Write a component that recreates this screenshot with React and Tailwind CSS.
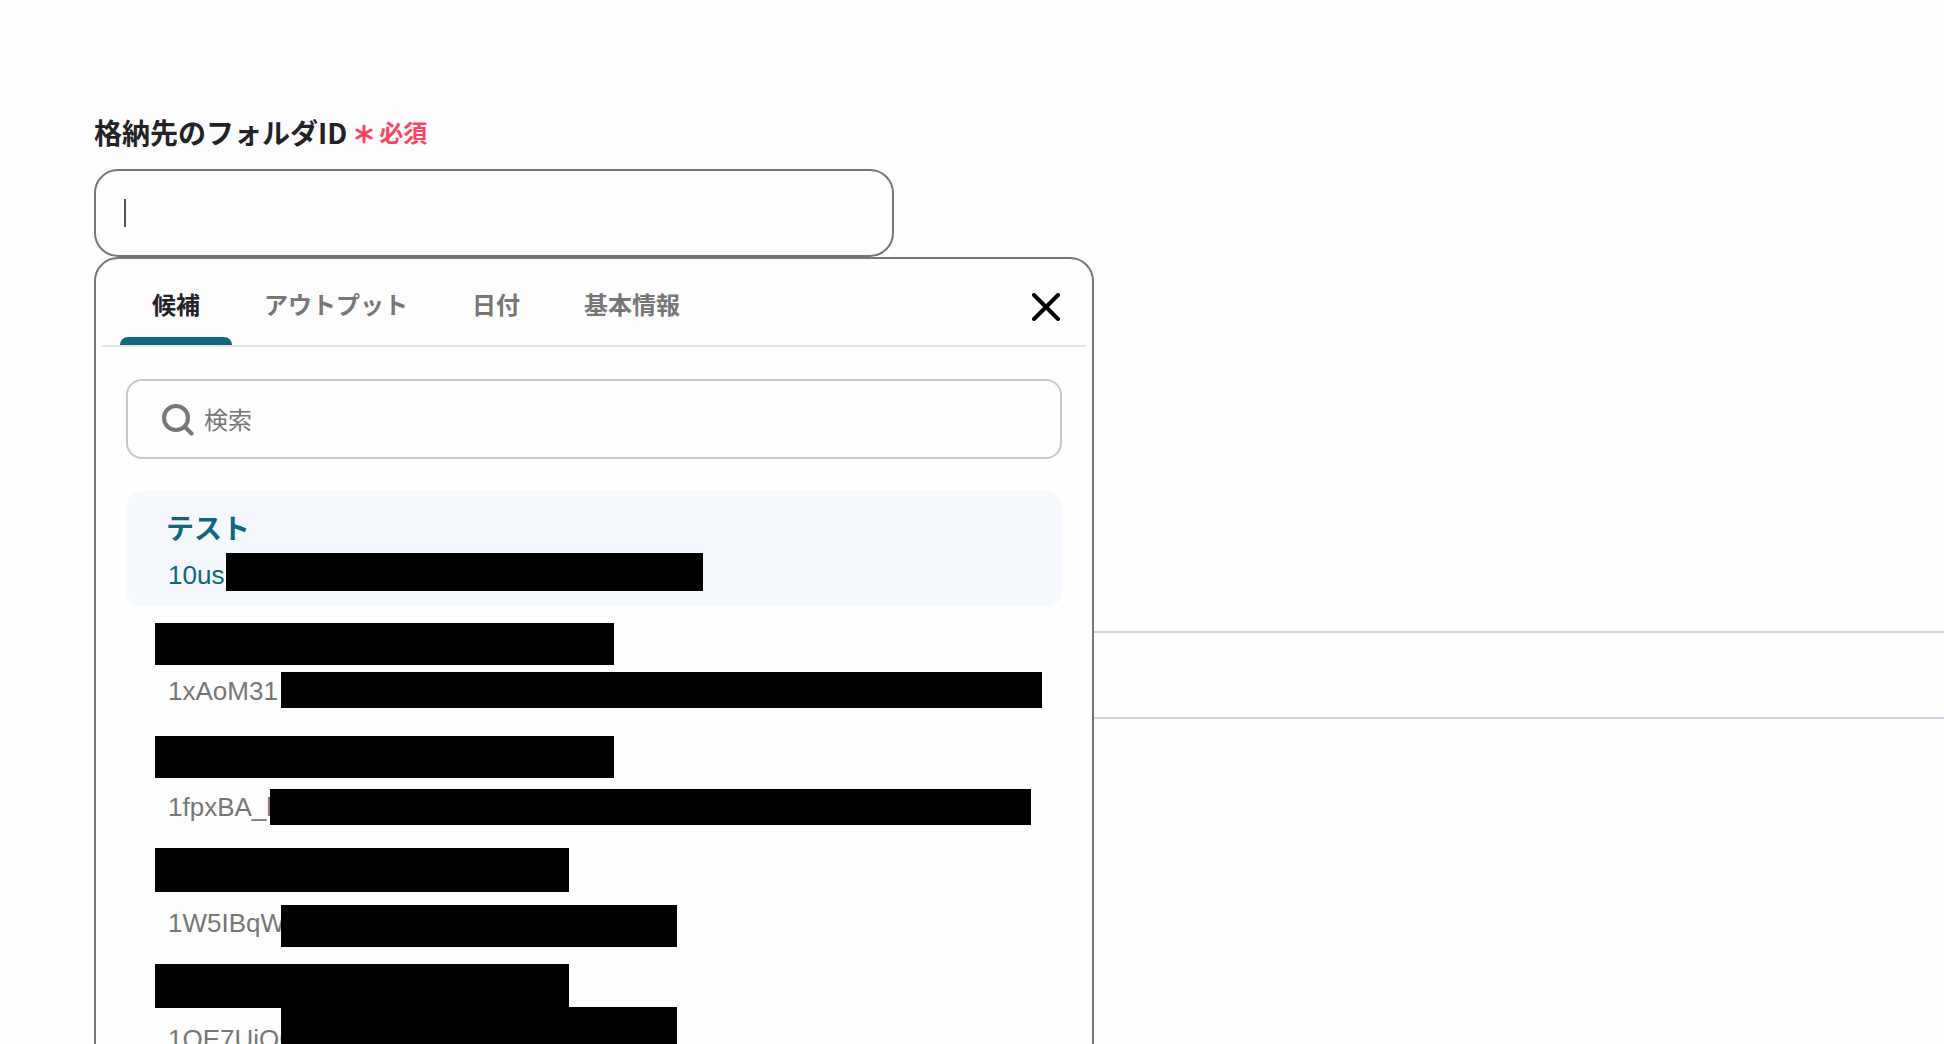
import { useState } from 'react'

const tabs = ['候補', 'アウトプット', '日付', '基本情報']

const candidates = [
  { id: '10us', name: 'テスト', idMask: 'left-[100px] top-[62px] w-[477px] h-[38px]' },
  { id: '1xAoM31', nameMask: 'top-4 w-[459px] h-[42px]', idMask: 'left-[155px] top-[65px] w-[761px] h-9' },
  { id: '1fpxBA_l', nameMask: 'top-[13px] w-[459px] h-[42px]', idMask: 'left-[144px] top-[66px] w-[761px] h-9' },
  { id: '1W5IBqW', nameMask: 'top-[9px] w-[414px] h-11', idMask: 'left-[155px] top-[66px] w-[396px] h-[42px]' },
  { id: '1QE7UjQC', nameMask: 'top-[9px] w-[414px] h-11', idMask: 'left-[155px] top-[52px] w-[396px] h-[42px]' },
]

function SearchIcon() {
  return (
    <svg className="shrink-0" width="32" height="34" viewBox="0 0 32 34" fill="none" stroke="#777" strokeWidth="4" strokeLinecap="round" aria-hidden="true">
      <circle cx="14" cy="16" r="12" />
      <path d="M23 25L29.5 31.5" />
    </svg>
  )
}

function CloseIcon() {
  return (
    <svg width="28" height="28" viewBox="0 0 28 28" fill="none" stroke="#000" strokeWidth="4" strokeLinecap="round" aria-hidden="true">
      <path d="M2 2L26 26M26 2L2 26" />
    </svg>
  )
}

function Candidate({ item, selected, onSelect }) {
  return (
    <li>
      <button
        type="button"
        aria-label={item.id}
        onClick={onSelect}
        className={`relative flex w-full h-[116px] flex-col items-start rounded-2xl pl-10 pt-4 text-left ${
          selected ? 'bg-[#f5f9fd] text-[#0d6680]' : 'text-[#777]'
        }`}
      >
        <span className="h-11 text-[28px] leading-[46px] font-bold">{item.name}</span>
        <span className="pl-0.5 text-[26px] leading-[48px]">{item.id}</span>
        {item.nameMask && <span className={`absolute left-[29px] bg-black ${item.nameMask}`} />}
        <span className={`absolute bg-black ${item.idMask}`} />
      </button>
    </li>
  )
}

export default function App() {
  const [folderId, setFolderId] = useState('')
  const [tab, setTab] = useState('候補')
  const [open, setOpen] = useState(true)
  const [selected, setSelected] = useState('10us')

  return (
    <main className="min-h-screen overflow-hidden bg-[#fefefe] pl-[94px] pt-28 font-['Liberation_Sans','Noto_Sans_CJK_JP',sans-serif] text-[#232227]">
      <div className="flex h-10 items-center gap-2 font-bold">
        <label htmlFor="folder" className="font-['Noto_Sans_CJK_JP',sans-serif] text-[28px] leading-10">格納先のフォルダID</label>
        <span className="flex items-center gap-1.5 pt-1 text-2xl text-[#fd4460]">
          <svg width="18" height="20" viewBox="0 0 18 20" fill="none" stroke="#fd4460" strokeWidth="3" strokeLinecap="round" aria-hidden="true">
            <path d="M9 2V18M2 6L16 14M16 6L2 14" />
          </svg>
          必須
        </span>
      </div>

      <div className="relative mt-[17px] w-[800px]">
        <input
          id="folder"
          type="text"
          value={folderId}
          onChange={(e) => setFolderId(e.target.value)}
          onFocus={() => setOpen(true)}
          className="block h-[88px] w-full rounded-3xl border-2 border-[#777] bg-transparent px-7 text-[28px] outline-none"
        />
        {!folderId && <span className="pointer-events-none absolute left-[30px] top-[30px] h-7 w-0.5 bg-[#555]" />}

        {open && (
          <div className="absolute left-0 top-full z-10 w-[1000px] rounded-3xl border-2 border-[#777] bg-[#fefefe] px-1.5 pb-8">
            <div className="flex h-[88px] items-stretch justify-between border-b-2 border-[#e5e5e5] pl-[18px] pr-[26px]">
              <div role="tablist" className="flex">
                {tabs.map((name) => (
                  <button
                    key={name}
                    type="button"
                    role="tab"
                    aria-selected={tab === name}
                    onClick={() => setTab(name)}
                    className={`flex flex-col text-2xl font-bold ${tab === name ? 'text-[#232227]' : 'text-[#777]'}`}
                  >
                    <span className="px-8 pt-6 leading-[46px]">{name}</span>
                    <span className={`mt-auto h-2 w-full rounded-t-lg ${tab === name ? 'bg-[#0d6680]' : ''}`} />
                  </button>
                ))}
              </div>
              <button type="button" aria-label="閉じる" onClick={() => setOpen(false)} className="pt-2.5">
                <CloseIcon />
              </button>
            </div>

            <div className="px-6 pt-8">
              <label className="flex h-20 items-center gap-2.5 rounded-2xl border-2 border-[#c8c7ca] pl-[34px] pr-6">
                <SearchIcon />
                <input
                  type="search"
                  aria-label="検索"
                  placeholder="検索"
                  className="w-full bg-transparent pt-1 text-2xl outline-none placeholder:text-[#777]"
                />
              </label>
              <ul className="mt-8">
                {candidates.map((c) => (
                  <Candidate key={c.id} item={c} selected={selected === c.id} onSelect={() => setSelected(c.id)} />
                ))}
              </ul>
            </div>
          </div>
        )}
      </div>

      <section className="mt-[374px] h-[88px] border-y-2 border-[#cdd3df]" />
    </main>
  )
}
